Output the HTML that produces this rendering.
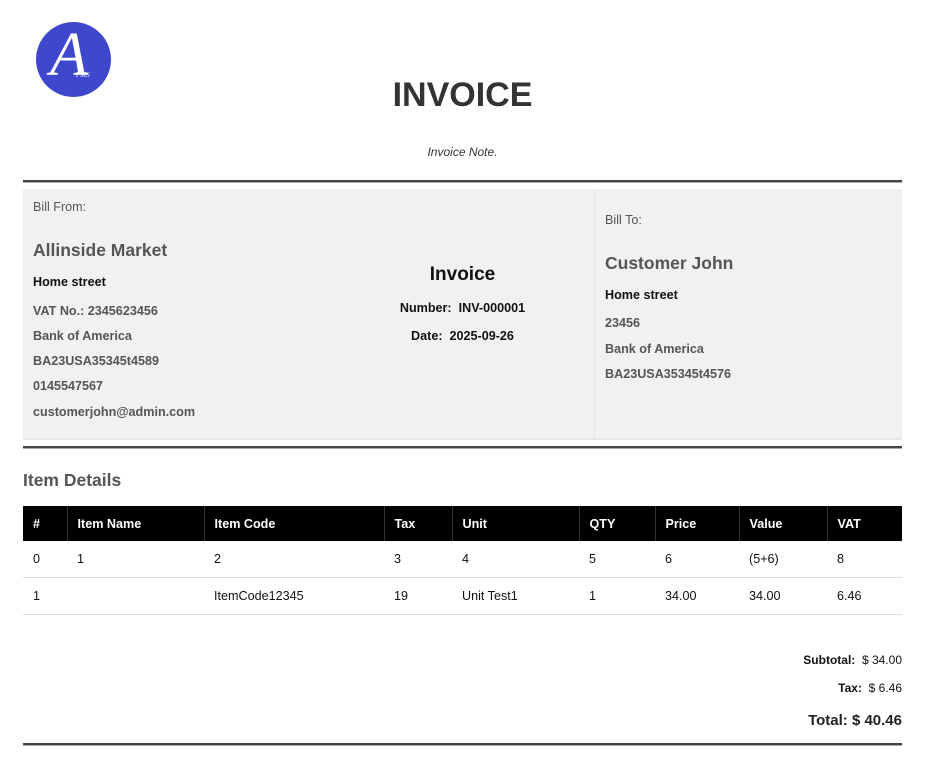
<!DOCTYPE html>
<html><head><meta charset="utf-8"><style>
body{margin:0;width:933px;height:774px;background:#fff;font-family:"Liberation Sans",Arial,sans-serif;position:relative;overflow:hidden}
.a{position:absolute;white-space:nowrap}
.hr{position:absolute;left:23px;width:879px;height:2px;background:#444;border-bottom:1px solid #aaa}
.g{color:#555;font-weight:bold;font-size:12.6px}
table{position:absolute;left:23px;top:506px;width:879px;border-collapse:collapse;font-size:12.6px;table-layout:fixed}
th{background:#000;color:#fff;text-align:left;font-weight:bold;height:35px;padding:0 10px;border-left:1px solid #333}
th:first-child{border-left:none}
td{height:36px;padding:0 10px;border-bottom:1px solid #ddd;color:#111}
</style></head><body>
<div class="a" style="left:36px;top:22px;width:75px;height:75px;border-radius:50%;background:#3f48cc"></div>
<div class="a" style="left:50px;top:22px;font-family:'Liberation Serif',serif;font-style:italic;color:#fff;font-size:62px;line-height:66px">A</div>
<div class="a" style="left:76px;top:71px;font-family:'Liberation Serif',serif;font-style:italic;color:#fff;font-size:7px">PMS</div>
<div class="a" style="left:0;width:925px;top:76px;text-align:center;font-size:34px;font-weight:bold;color:#333">INVOICE</div>
<div class="a" style="left:0;width:925px;top:145px;text-align:center;font-size:12px;font-style:italic;color:#333">Invoice Note.</div>
<div class="hr" style="top:180px"></div>
<div class="a" style="left:23px;top:189px;width:879px;height:249px;background:#f1f1f1;border-bottom:2px solid #e6e6e6"></div>
<div class="a" style="left:594px;top:189px;width:1px;height:249px;background:#e4e4e4"></div>
<div class="a g" style="left:33px;top:200px;font-weight:normal">Bill From:</div>
<div class="a" style="left:33px;top:240px;font-size:17.5px;font-weight:bold;color:#555">Allinside Market</div>
<div class="a" style="left:33px;top:275px;font-size:12.6px;font-weight:bold;color:#111">Home street</div>
<div class="a g" style="left:33px;top:304px">VAT No.: 2345623456</div>
<div class="a g" style="left:33px;top:329px">Bank of America</div>
<div class="a g" style="left:33px;top:354px">BA23USA35345t4589</div>
<div class="a g" style="left:33px;top:379px">0145547567</div>
<div class="a g" style="left:33px;top:405px">customerjohn@admin.com</div>
<div class="a" style="left:330px;width:265px;top:264px;text-align:center;font-size:19px;font-weight:bold;color:#111">Invoice</div>
<div class="a" style="left:330px;width:265px;top:301px;text-align:center;font-size:12.6px;font-weight:bold;color:#111">Number:&nbsp; INV-000001</div>
<div class="a" style="left:330px;width:265px;top:329px;text-align:center;font-size:12.6px;font-weight:bold;color:#111">Date:&nbsp; 2025-09-26</div>
<div class="a g" style="left:605px;top:213px;font-weight:normal">Bill To:</div>
<div class="a" style="left:605px;top:253px;font-size:17.5px;font-weight:bold;color:#555">Customer John</div>
<div class="a" style="left:605px;top:288px;font-size:12.6px;font-weight:bold;color:#111">Home street</div>
<div class="a g" style="left:605px;top:316px">23456</div>
<div class="a g" style="left:605px;top:342px">Bank of America</div>
<div class="a g" style="left:605px;top:367px">BA23USA35345t4576</div>
<div class="hr" style="top:446px"></div>
<div class="a" style="left:23px;top:470px;font-size:17.5px;font-weight:bold;color:#555">Item Details</div>
<table>
<colgroup><col style="width:44px"><col style="width:137px"><col style="width:180px"><col style="width:68px"><col style="width:127px"><col style="width:76px"><col style="width:84px"><col style="width:88px"><col style="width:75px"></colgroup>
<tr><th>#</th><th>Item Name</th><th>Item Code</th><th>Tax</th><th>Unit</th><th>QTY</th><th>Price</th><th>Value</th><th>VAT</th></tr>
<tr><td>0</td><td>1</td><td>2</td><td>3</td><td>4</td><td>5</td><td>6</td><td>(5+6)</td><td>8</td></tr>
<tr><td>1</td><td></td><td>ItemCode12345</td><td>19</td><td>Unit Test1</td><td>1</td><td>34.00</td><td>34.00</td><td>6.46</td></tr>
</table>
<div class="a" style="right:31px;top:653px;font-size:12px;color:#111"><b>Subtotal:</b>&nbsp; $ 34.00</div>
<div class="a" style="right:31px;top:681px;font-size:12px;color:#111"><b>Tax:</b>&nbsp; $ 6.46</div>
<div class="a" style="right:31px;top:712px;font-size:15px;font-weight:bold;color:#222">Total: $ 40.46</div>
<div class="hr" style="top:743px"></div>
</body></html>
